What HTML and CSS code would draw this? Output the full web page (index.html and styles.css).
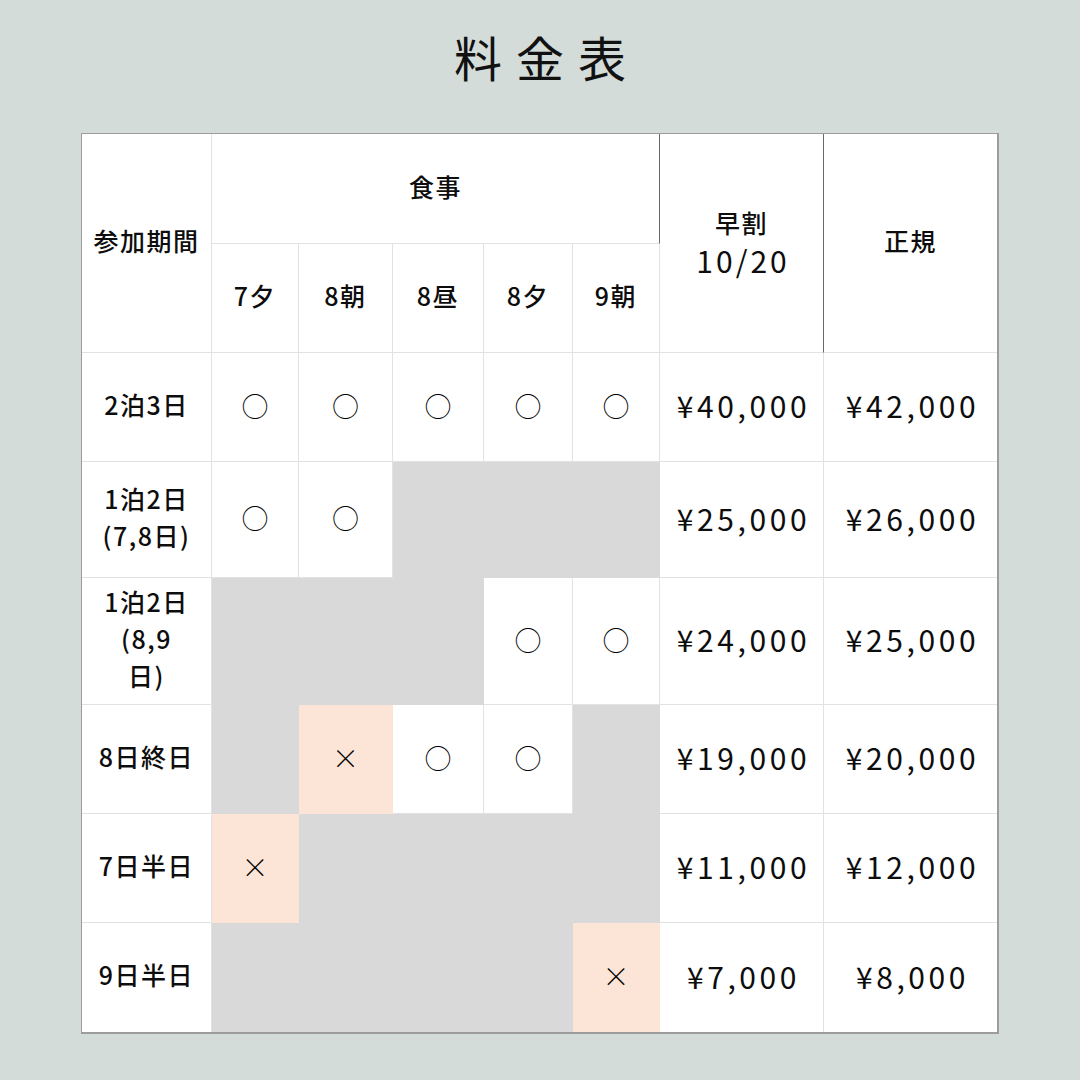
FILE: index.html
```html
<!DOCTYPE html>
<html lang="ja">
<head>
<meta charset="utf-8">
<title>料金表</title>
<link rel="stylesheet" href="styles.css">
</head>
<body>
<main class="page">
  <h1 class="title">料金表</h1>
  <table class="fees">
    <colgroup>
      <col class="c-label">
      <col class="c-m1">
      <col class="c-m2">
      <col class="c-m3">
      <col class="c-m4">
      <col class="c-m5">
      <col class="c-early">
      <col class="c-regular">
    </colgroup>
    <thead>
      <tr class="r-head1">
        <th rowspan="2" class="label">参加期間</th>
        <th colspan="5" class="meal-group">食事</th>
        <th rowspan="2" class="early">早割<br><span class="num">10/20</span></th>
        <th rowspan="2" class="regular last-col">正規</th>
      </tr>
      <tr class="r-head2">
        <th class="meal">7夕</th>
        <th class="meal">8朝</th>
        <th class="meal">8昼</th>
        <th class="meal">8夕</th>
        <th class="meal">9朝</th>
      </tr>
    </thead>
    <tbody>
      <tr class="r-a">
        <td class="label">2泊3日</td>
        <td class="mark">○</td>
        <td class="mark">○</td>
        <td class="mark">○</td>
        <td class="mark">○</td>
        <td class="mark">○</td>
        <td class="price">¥40,000</td>
        <td class="price last-col">¥42,000</td>
      </tr>
      <tr class="r-b">
        <td class="label">1泊2日<br>(7,8日)</td>
        <td class="mark">○</td>
        <td class="mark">○</td>
        <td class="na"></td>
        <td class="na"></td>
        <td class="na"></td>
        <td class="price">¥25,000</td>
        <td class="price last-col">¥26,000</td>
      </tr>
      <tr class="r-c">
        <td class="label">1泊2日<br>(8,9<br>日)</td>
        <td class="na"></td>
        <td class="na"></td>
        <td class="na"></td>
        <td class="mark">○</td>
        <td class="mark">○</td>
        <td class="price">¥24,000</td>
        <td class="price last-col">¥25,000</td>
      </tr>
      <tr class="r-d">
        <td class="label">8日終日</td>
        <td class="na"></td>
        <td class="mark no">×</td>
        <td class="mark">○</td>
        <td class="mark">○</td>
        <td class="na"></td>
        <td class="price">¥19,000</td>
        <td class="price last-col">¥20,000</td>
      </tr>
      <tr class="r-e">
        <td class="label">7日半日</td>
        <td class="mark no">×</td>
        <td class="na"></td>
        <td class="na"></td>
        <td class="na"></td>
        <td class="na"></td>
        <td class="price">¥11,000</td>
        <td class="price last-col">¥12,000</td>
      </tr>
      <tr class="r-f last-row">
        <td class="label">9日半日</td>
        <td class="na"></td>
        <td class="na"></td>
        <td class="na"></td>
        <td class="na"></td>
        <td class="mark no">×</td>
        <td class="price">¥7,000</td>
        <td class="price last-col">¥8,000</td>
      </tr>
    </tbody>
  </table>
</main>
</body>
</html>
```

FILE: styles.css
```css
html, body {
  margin: 0;
  padding: 0;
}

body {
  background: #d3dcd9;
  width: 1080px;
  height: 1080px;
  overflow: hidden;
  color: #111;
  font-family: "Noto Sans CJK JP", "Noto Sans", sans-serif;
}

.page {
  display: flex;
  flex-direction: column;
  align-items: center;
}

.title {
  margin: 0;
  height: 133px;
  box-sizing: border-box;
  padding-bottom: 22px;
  padding-left: 14px;
  display: flex;
  align-items: center;
  justify-content: center;
  font-size: 48px;
  font-weight: 400;
  letter-spacing: 14px;
  line-height: 1;
}

.fees {
  width: 916px;
  table-layout: fixed;
  border-collapse: separate;
  border-spacing: 0;
  border: 1px solid #9c9c9c;
  border-right-width: 2px;
  border-bottom-width: 2px;
  background: #fff;
}

.c-label { width: 130px; }
.c-m1 { width: 87px; }
.c-m2 { width: 94px; }
.c-m3 { width: 91px; }
.c-m4 { width: 89px; }
.c-m5 { width: 87px; }
.c-early { width: 164px; }
.c-regular { width: 173px; }

.fees th,
.fees td {
  padding: 0 0 6px 0;
  text-align: center;
  vertical-align: middle;
  border-right: 1px solid #e2e2e2;
  border-bottom: 1px solid #e2e2e2;
  font-weight: 500;
  font-size: 25px;
  line-height: 37px;
  letter-spacing: 1.5px;
  color: #0d0d0d;
}

.fees .last-col {
  border-right: none;
}

.fees .last-row td {
  border-bottom: none;
}

.r-head1 { height: 110px; }
.r-head2 { height: 109px; }
.r-a { height: 109px; }
.r-b { height: 116px; }
.r-c { height: 127px; }
.r-d { height: 109px; }
.r-e { height: 109px; }
.r-f { height: 109px; }

.fees .meal-group {
  border-right-color: #6a6a6a;
  padding-bottom: 4px;
}

.fees .early {
  border-right-color: #6a6a6a;
  line-height: 38px;
  padding-bottom: 2px;
}

.num {
  font-weight: 400;
  font-size: 30px;
  letter-spacing: 3px;
  padding-left: 3px;
}

.fees .price {
  font-weight: 400;
  font-size: 30px;
  letter-spacing: 3.6px;
  padding: 0 0 3px 4px;
}

.fees .mark {
  font-weight: 300;
  font-size: 27px;
  letter-spacing: 0;
  padding-bottom: 4px;
  color: #000;
}

.fees .na {
  background: #d9d9d9;
  border-color: #d9d9d9;
}

.fees .no {
  background: #fce4d6;
  border-color: #fce4d6;
}
```
